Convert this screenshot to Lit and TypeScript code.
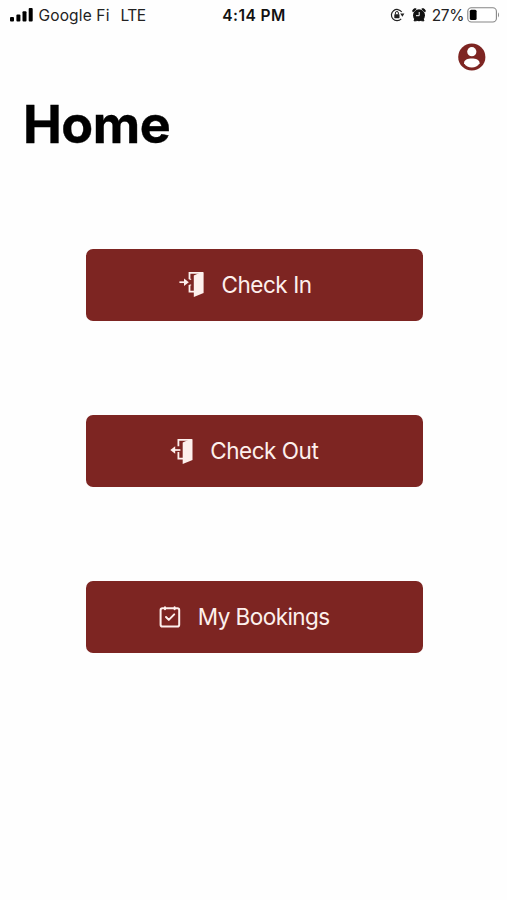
import { LitElement, html, css, svg } from "lit";
import { customElement } from "lit/decorators.js";

const doorFrame = svg`
  <path d="M10.5 8.3V1.8H24M10.5 14V20.7H15.5" fill="none" stroke="currentColor" stroke-width="1.8"/>
  <path d="M14.8 4.4L22 1.2H24.6V22L14.8 26z" fill="currentColor"/>`;

const checkIn = html`<svg width="25" height="27" viewBox="0 0 25 27">
  ${doorFrame}
  <path d="M.4 11.2H7" stroke="currentColor" stroke-width="1.7"/>
  <path d="M5 7.4L9.8 11.2L5 15z" fill="currentColor"/>
  <path d="M10.5 8.3H12.2M10.5 14H12.2" stroke="currentColor" stroke-width="1"/></svg>`;

const checkOut = html`<svg width="23" height="27" viewBox="0 0 23 27">
  <g transform="translate(-2.1 0)">${doorFrame}</g>
  <path d="M3 12H10.4" stroke="currentColor" stroke-width="1.7"/>
  <path d="M5.2 8.2L.3 12L5.2 15.8z" fill="currentColor"/></svg>`;

const bookings = html`<svg width="22" height="24" viewBox="0 0 22 24">
  <g fill="none" stroke="currentColor" stroke-width="2" stroke-linecap="round" stroke-linejoin="round">
    <rect x="1.6" y="3.2" width="18.6" height="18.4" rx="1.8"/>
    <path d="M6 2.2V4.2M15.6 2.2V4.2M7 12L9.8 14.9L15.2 9.4"/>
  </g></svg>`;

@customElement("app-root")
export class AppRoot extends LitElement {
  static styles = css`
    :host {
      display: block;
      box-sizing: border-box;
      height: 900px;
      background: #fefefe;
      color: #000;
      font-family: Inter, "Liberation Sans", sans-serif;
      overflow: hidden;
    }
    svg { display: block; flex: none; }
    .status {
      display: grid;
      grid-template-columns: 1fr auto 1fr;
      align-items: center;
      height: 30px;
      padding: 0 8px 0 9px;
      font-size: 15.5px;
      color: #222;
    }
    .left, .right { display: flex; align-items: center; }
    .right { justify-content: flex-end; margin-right: -1px; }
    .carrier { margin-left: 4.5px; letter-spacing: 0.15px; }
    .network { margin-left: 11px; letter-spacing: -0.5px; }
    .time { font-weight: 600; color: #111; letter-spacing: 0.45px; }
    .alarm { margin-left: 7px; }
    .percent { margin: 0 3px 0 6px; letter-spacing: -0.4px; }
    .toolbar { display: flex; justify-content: flex-end; padding: 13px 21px 0 0; }
    h1 {
      margin: 20px 0 0 23px;
      font-size: 52px;
      line-height: 68px;
      font-weight: 700;
      letter-spacing: -0.5px;
      -webkit-text-stroke: 0.4px #000;
    }
    .actions {
      display: flex;
      flex-direction: column;
      align-items: center;
      gap: 94.5px;
      margin: 90px 0 0 1px;
    }
    .action {
      display: flex;
      align-items: center;
      justify-content: center;
      box-sizing: border-box;
      width: 337px;
      height: 71.7px;
      padding: 0 17px 0 0;
      border: 0;
      border-radius: 7px;
      background: #7d2522;
      color: #fdf0ed;
      font: 400 22.5px/30px Inter, "Liberation Sans", sans-serif;
      letter-spacing: -0.45px;
      gap: 17px;
    }
    .action.out { padding-right: 19.5px; }
    .action.list { padding-right: 19.5px; letter-spacing: -0.55px; }
  `;

  private action(icon: unknown, label: string, kind: string) {
    return html`<button class="action ${kind}">${icon}<span>${label}</span></button>`;
  }

  render() {
    return html`
      <div class="status">
        <div class="left">
          <svg width="25" height="16" viewBox="0 0 25 16" fill="#000">
            <rect x="1" y="10" width="4" height="4.5" rx="1"/>
            <rect x="7.4" y="7.5" width="4" height="7" rx="1"/>
            <rect x="13.5" y="4.2" width="4" height="10.3" rx="1"/>
            <rect x="19.7" y="1" width="4" height="13.5" rx="1"/>
          </svg>
          <span class="carrier">Google Fi</span><span class="network">LTE</span>
        </div>
        <span class="time">4:14 PM</span>
        <div class="right">
          <svg width="15" height="14" viewBox="0 0 15 14">
            <path d="M11.7 4A5.6 5.6 0 1 0 11.2 10.8" fill="none" stroke="#222" stroke-width="1.2"/>
            <path d="M10.2 5.6H14.4L12.4 8.8z" fill="#222"/>
            <rect x="4.3" y="6.2" width="5.2" height="4" rx=".6" fill="#222"/>
            <path d="M5.4 6.5V5A1.5 1.5 0 0 1 8.4 5V6.5" fill="none" stroke="#222"/>
          </svg>
          <svg class="alarm" width="14" height="14" viewBox="0 0 14 14">
            <circle cx="7" cy="7.2" r="6" fill="#111"/>
            <path d="M.9 3.8A2.3 2.3 0 0 1 4.2 1zM13.1 3.8A2.3 2.3 0 0 0 9.8 1zM2.8 11L2 12.8H4.5zM11.2 11L12 12.8H9.5z" fill="#111" stroke="#111"/>
            <path d="M7.2 4V7.7H4" fill="none" stroke="#fff" stroke-width="1"/>
          </svg>
          <span class="percent">27%</span>
          <svg width="33" height="16" viewBox="0 0 33 16">
            <rect x=".8" y=".8" width="28.6" height="14.2" rx="3.6" fill="#fff" stroke="#858585" stroke-width="1.1"/>
            <rect x="2.8" y="2.8" width="6.8" height="10.2" rx="1.5" fill="#000"/>
            <path d="M31 5.3Q33 8 31 10.6z" fill="#858585"/>
          </svg>
        </div>
      </div>
      <div class="toolbar">
        <svg width="28" height="28" viewBox="0 0 28 28">
          <circle cx="13.8" cy="14" r="13.6" fill="#7d2522"/>
          <circle cx="13.8" cy="8.7" r="4.6" fill="#fff"/>
          <path d="M6 20.2C6 16.7 9.8 15.4 13.8 15.4S21.6 16.7 21.6 20.2C19.8 23.4 17 24.4 13.8 24.4S7.8 23.4 6 20.2z" fill="#fff"/>
        </svg>
      </div>
      <h1>Home</h1>
      <div class="actions">
        ${this.action(checkIn, "Check In", "in")}
        ${this.action(checkOut, "Check Out", "out")}
        ${this.action(bookings, "My Bookings", "list")}
      </div>`;
  }
}
